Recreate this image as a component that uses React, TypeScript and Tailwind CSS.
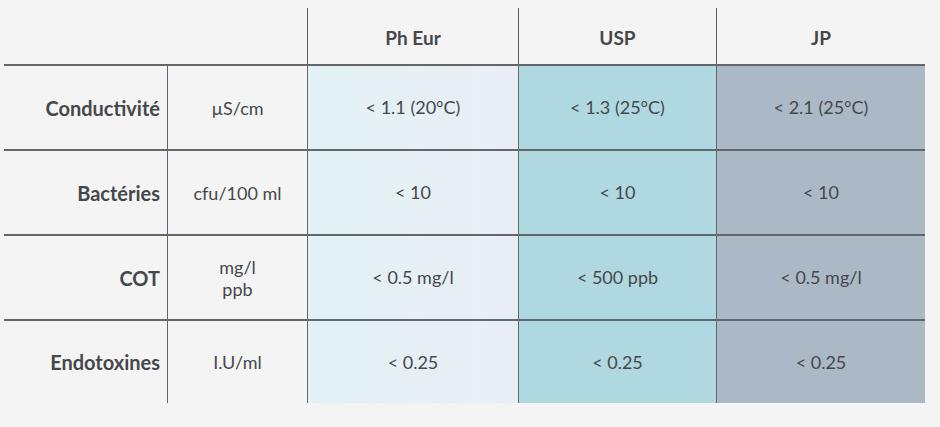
const rows = [
  { label: "Conductivité", unit: ["µS/cm"], values: ["< 1.1 (20°C)", "< 1.3 (25°C)", "< 2.1 (25°C)"] },
  { label: "Bactéries", unit: ["cfu/100 ml"], values: ["< 10", "< 10", "< 10"] },
  { label: "COT", unit: ["mg/l", "ppb"], values: ["< 0.5 mg/l", "< 500 ppb", "< 0.5 mg/l"] },
  { label: "Endotoxines", unit: ["I.U/ml"], values: ["< 0.25", "< 0.25", "< 0.25"] },
];

const colBg = [
  "bg-gradient-to-r from-[#e2f1f4] to-[#e9eef5]",
  "bg-[#b0d8e0]",
  "bg-[#abb9c7]",
];

export default function App() {
  return (
    <div
      className="w-[940px] h-[427px] bg-[#f4f4f4] pt-2 pl-1 text-[#45484b]"
      style={{ fontFamily: "Lato, 'Open Sans', sans-serif" }}
    >
      <div className="grid grid-cols-[163px_140px_211px_198px_209px]">
        {/* header */}
        <div className="h-14" />
        <div className="h-14" />
        {["Ph Eur", "USP", "JP"].map((h) => (
          <div
            key={h}
            className="h-14 flex items-center justify-center border-l border-[#5c5c5c] text-[19px] font-bold pt-1"
          >
            {h}
          </div>
        ))}

        {rows.map((r, i) => (
          <div key={r.label} className="contents">
            <div
              className={`flex items-center justify-end pr-[7px] text-[20px] font-bold border-t-2 border-[#63676b] ${
                i === rows.length - 1 ? "h-[84px]" : "h-[85px]"
              }`}
            >
              {r.label}
            </div>
            <div className="flex flex-col items-center justify-center border-t-2 border-l border-[#63676b] text-[18px] leading-[22px]">
              {r.unit.map((u) => (
                <span key={u}>{u}</span>
              ))}
            </div>
            {r.values.map((v, j) => (
              <div
                key={j}
                className={`flex items-center justify-center border-t-2 border-l border-[#63676b] text-[18px] ${colBg[j]}`}
              >
                {v}
              </div>
            ))}
          </div>
        ))}
      </div>
    </div>
  );
}
